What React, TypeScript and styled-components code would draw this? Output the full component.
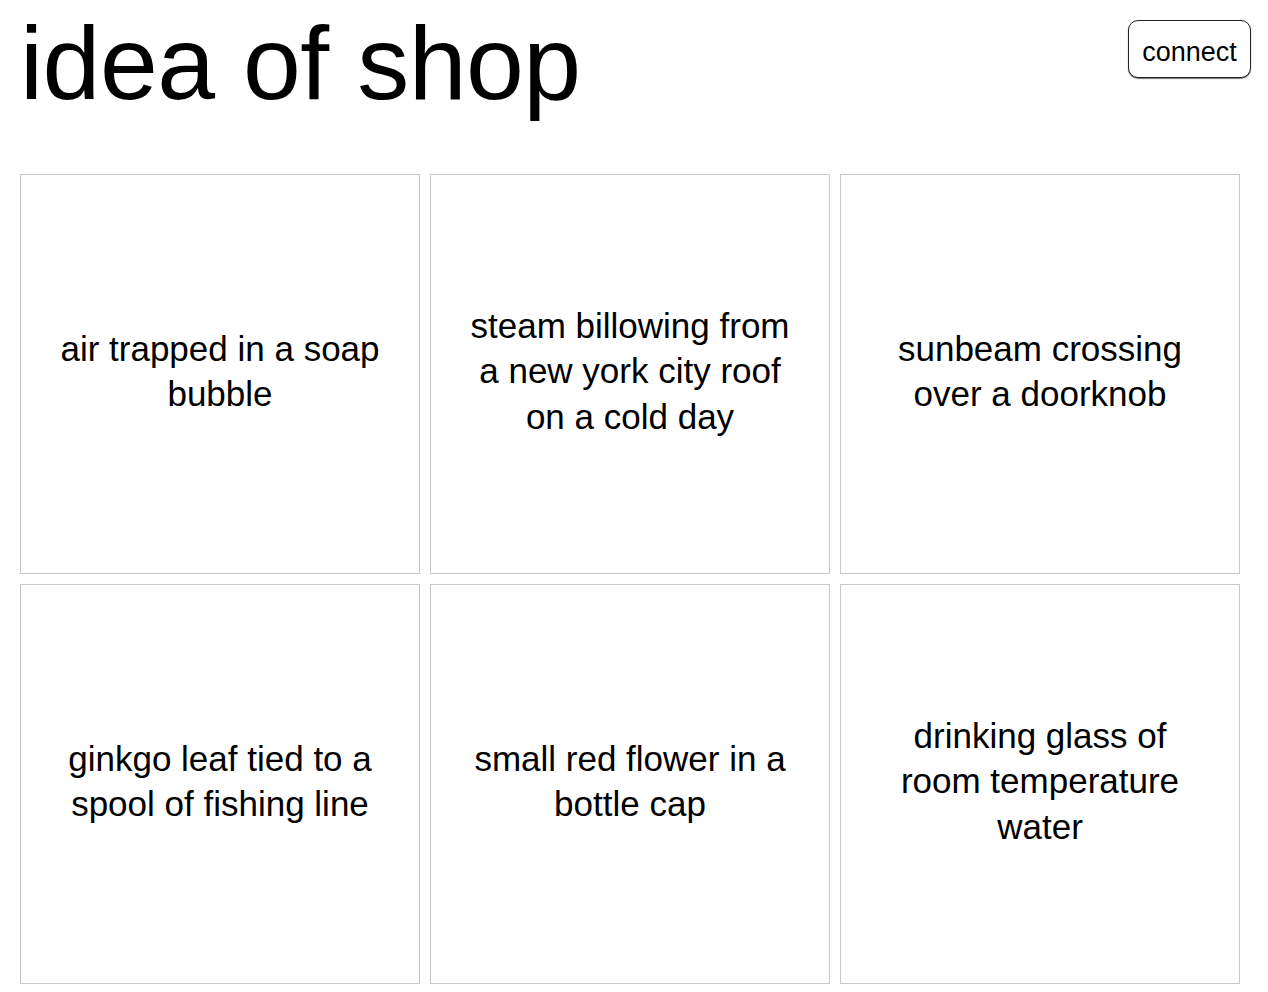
import React from 'react'
import styled, { createGlobalStyle } from 'styled-components'

const ideas = [
  'air trapped in a soap bubble',
  'steam billowing from a new york city roof on a cold day',
  'sunbeam crossing over a doorknob',
  'ginkgo leaf tied to a spool of fishing line',
  'small red flower in a bottle cap',
  'drinking glass of room temperature water',
]

const GlobalStyle = createGlobalStyle`
  body {
    margin: 0;
    background: #fff;
    color: #000;
    font-family: 'Liberation Sans', Arial, Helvetica, sans-serif;
  }
`

const Page = styled('div')`
  padding: 0 17px 0 20px;
`

const Header = styled('header')`
  display: flex;
  justify-content: space-between;
  align-items: flex-start;
  height: 174px;
`

const Title = styled('h1')`
  margin: 0;
  padding-top: 4px;
  font-size: 104px;
  font-weight: 400;
  line-height: 1.15;
  letter-spacing: -0.5px;
`

const ConnectButton = styled('button')`
  margin-top: 20px;
  width: 123px;
  height: 58px;
  padding: 6px 0 0;
  background: #fff;
  color: #000;
  border: 1px solid #222;
  border-radius: 10px;
  box-shadow: 0 1px 1px rgba(0, 0, 0, 0.55);
  font-family: 'Liberation Sans', Arial, Helvetica, sans-serif;
  font-size: 27px;
  cursor: pointer;
`

const Grid = styled('main')`
  display: grid;
  grid-template-columns: repeat(3, 400px);
  gap: 10px;
`

const Card = styled('div')`
  box-sizing: border-box;
  width: 400px;
  height: 400px;
  border: 1px solid #c8c8c8;
  padding: 0 30px 6px;
  display: flex;
  align-items: center;
  justify-content: center;
  text-align: center;
  font-size: 35px;
  line-height: 1.3;
`

export default function App() {
  return (
    <Page>
      <GlobalStyle />
      <Header>
        <Title>idea of shop</Title>
        <ConnectButton>connect</ConnectButton>
      </Header>
      <Grid>
        {ideas.map((idea) => (
          <Card key={idea}>{idea}</Card>
        ))}
      </Grid>
    </Page>
  )
}
